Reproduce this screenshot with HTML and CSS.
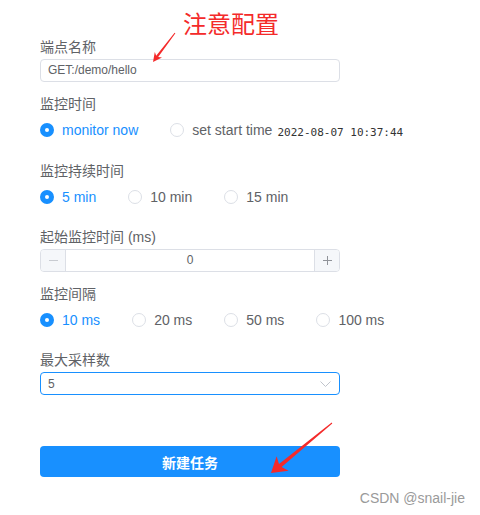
FILE: index.html
```html
<!DOCTYPE html>
<html lang="zh-CN">
<head>
  <meta charset="UTF-8" />
  <title>新建任务</title>
  <link rel="stylesheet" href="styles.css">
</head>
<body>
  <div class="page">

    <div class="form">
      <div class="item">
        <div class="label">端点名称</div>
        <div class="field">GET:/demo/hello</div>
      </div>

      <div class="item item-radio">
        <div class="label">监控时间</div>
        <div class="radio-row">
          <span class="radio checked"><span class="radio-dot"></span>monitor now</span>
          <span class="radio last"><span class="radio-dot"></span>set start time</span>
          <span class="date">2022-08-07 10:37:44</span>
        </div>
      </div>

      <div class="item item-radio">
        <div class="label">监控持续时间</div>
        <div class="radio-row">
          <span class="radio checked"><span class="radio-dot"></span>5 min</span>
          <span class="radio"><span class="radio-dot"></span>10 min</span>
          <span class="radio"><span class="radio-dot"></span>15 min</span>
        </div>
      </div>

      <div class="item">
        <div class="label">起始监控时间 (ms)</div>
        <div class="number">
          <span class="number-btn minus">
            <svg width="9" height="9" viewBox="0 0 9 9"><path d="M0 4.5h9" stroke="currentColor" stroke-width="1"/></svg>
          </span>
          <span class="number-value">0</span>
          <span class="number-btn plus">
            <svg width="9" height="9" viewBox="0 0 9 9"><path d="M0 4.5h9M4.5 0v9" stroke="currentColor" stroke-width="1"/></svg>
          </span>
        </div>
      </div>

      <div class="item item-radio">
        <div class="label">监控间隔</div>
        <div class="radio-row">
          <span class="radio checked"><span class="radio-dot"></span>10 ms</span>
          <span class="radio"><span class="radio-dot"></span>20 ms</span>
          <span class="radio"><span class="radio-dot"></span>50 ms</span>
          <span class="radio"><span class="radio-dot"></span>100 ms</span>
        </div>
      </div>

      <div class="item">
        <div class="label">最大采样数</div>
        <div class="select">
          <span>5</span>
          <svg width="11" height="6" viewBox="0 0 11 6"><path d="M0.5 0.5l5 5 5-5" fill="none" stroke="#c0c4cc" stroke-width="1"/></svg>
        </div>
      </div>

      <div class="submit">新建任务</div>
    </div>

    <!-- пометки поверх скриншота -->
    <div class="note">注意配置</div>
    <svg class="marks" width="480" height="515" viewBox="0 0 480 515">
      <polygon fill="#f42a2a" points="175.4,33.3 158.2,57.1 162.0,57.5 153,62 154.8,52.1 156.2,55.7 174.6,32.7"/>
      <polygon fill="#f42a2a" points="332.3,423.4 281.6,467.0 288.6,470.8 271,473 276.6,456.2 279.0,463.9 331.7,422.6"/>
    </svg>
    <div class="watermark">CSDN @snail-jie</div>
  </div>
</body>
</html>
```

FILE: styles.css
```css
* {
  box-sizing: border-box;
}
html, body {
  margin: 0;
  background: #fff;
  font-family: "Liberation Sans", "Noto Sans CJK SC", sans-serif;
}

.page {
  position: relative;
  width: 480px;
  height: 515px;
  overflow: hidden;
}

/* Форма */
.form {
  width: 300px;
  margin-left: 40px;
  padding-top: 37px;
}

.item {
  margin-bottom: 12px;
}
.item-radio {
  margin-bottom: 21px;
}
.item-radio + .item-radio,
.form .item:nth-child(5) {
  margin-bottom: 20px;
}

.label {
  font-size: 14px;
  line-height: 20px;
  color: #606266;
  margin-bottom: 2px;
}
.item-radio .label {
  margin-bottom: 6px;
}

.field {
  height: 23px;
  border: 1px solid #dcdfe6;
  border-radius: 4px;
  padding-left: 7px;
  font-size: 12px;
  line-height: 21px;
  color: #606266;
}

/* Радио-кнопки */
.radio-row {
  display: flex;
  align-items: center;
  height: 20px;
}
.radio {
  display: inline-flex;
  align-items: center;
  margin-right: 32px;
  font-size: 14px;
  line-height: 20px;
  color: #606266;
  white-space: nowrap;
}
.radio.last {
  margin-right: 5px;
}
.radio-dot {
  width: 14px;
  height: 14px;
  border: 1px solid #dcdfe6;
  border-radius: 50%;
  background: #fff;
  margin-right: 8px;
}
.radio.checked {
  color: #1890ff;
}
.radio.checked .radio-dot {
  border: 5px solid #1890ff;
}
.date {
  font-family: "DejaVu Sans Mono", monospace;
  font-size: 11px;
  color: #333;
  margin-top: 5px;
  white-space: nowrap;
}

/* Числовое поле */
.number {
  display: flex;
  height: 23px;
  border: 1px solid #dcdfe6;
  border-radius: 4px;
  overflow: hidden;
}
.number-btn {
  width: 25px;
  display: flex;
  align-items: center;
  justify-content: center;
  background: #f5f7fa;
}
.number-btn.minus {
  border-right: 1px solid #dcdfe6;
  color: #c8cbd1;
}
.number-btn.plus {
  border-left: 1px solid #dcdfe6;
  color: #909399;
}
.number-value {
  flex: 1;
  text-align: center;
  font-size: 12px;
  line-height: 21px;
  color: #606266;
}

/* Выпадающий список */
.select {
  height: 23px;
  border: 1px solid #1890ff;
  border-radius: 4px;
  display: flex;
  align-items: center;
  justify-content: space-between;
  padding: 0 8px 0 7px;
  font-size: 12px;
  color: #606266;
}

.submit {
  margin-top: 51px;
  height: 31px;
  border-radius: 4px;
  background: #1890ff;
  color: #fff;
  font-size: 14px;
  font-weight: 700;
  display: flex;
  align-items: center;
  justify-content: center;
}

/* Пометки */
.note {
  position: absolute;
  top: 13px;
  left: 183px;
  font-size: 24px;
  line-height: 24px;
  color: #f42a2a;
}
.marks {
  position: absolute;
  top: 0;
  left: 0;
  pointer-events: none;
}
.watermark {
  position: absolute;
  right: 15px;
  top: 490px;
  font-size: 14px;
  line-height: 16px;
  color: #9a9a9a;
}
```
